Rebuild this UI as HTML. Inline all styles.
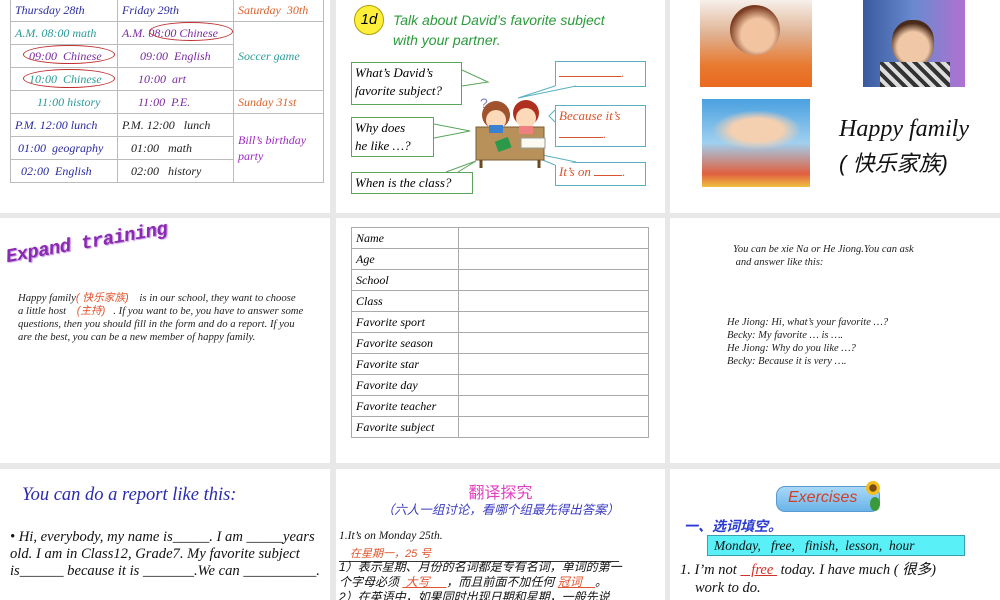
<!DOCTYPE html>
<html><head><meta charset="utf-8"><style>
*{margin:0;padding:0;box-sizing:border-box}
body{width:1000px;height:600px;background:#e8e8e8;position:relative;overflow:hidden;font-family:"Liberation Serif","Noto Serif CJK SC",serif}
.p{position:absolute;background:#fff;overflow:hidden}
.a{position:absolute;white-space:nowrap}
.i{font-style:italic}
table{border-collapse:collapse}
.tt td{border:1px solid #bbb;font-style:italic;font-size:12px;padding:0 4px;height:23px;vertical-align:middle;white-space:nowrap}
.fm td{border:1px solid #aaa;font-style:italic;font-size:12px;padding:0 4px;height:21px}
.bx{position:absolute;border:1px solid #5aa55a;background:#fff;font-style:italic;font-size:13px;line-height:18px;padding:1px 3px}
.bb{position:absolute;border:1px solid #5ab0c0;background:#fff;font-style:italic;font-size:13px;color:#d9532c;padding:1px 3px}
.cn{font-family:"Liberation Sans","Noto Sans CJK SC",sans-serif}
</style></head><body>

<!-- top left -->
<div class="p" style="left:0;top:0;width:330px;height:213px">
<table class="tt" style="position:absolute;left:10px;top:-2px;width:314px;border:1px solid #888">
<tr><td style="color:#2a2aa0;width:107px">Thursday 28th</td><td style="color:#2a2aa0;width:116px">Friday 29th</td><td style="color:#d9632c">Saturday&nbsp; 30th</td></tr>
<tr><td style="color:#2a9a9a">A.M. 08:00 math</td><td style="color:#7a2aa0">A.M. 08:00 Chinese</td><td rowspan="3" style="color:#2a9a9a">Soccer game</td></tr>
<tr><td style="color:#7a2aa0;padding-left:18px">09:00&nbsp; Chinese</td><td style="color:#7a2aa0;padding-left:22px">09:00&nbsp; English</td></tr>
<tr><td style="color:#2a9a9a;padding-left:18px">10:00&nbsp; Chinese</td><td style="color:#7a2aa0;padding-left:20px">10:00&nbsp; art</td></tr>
<tr><td style="color:#2a9a9a;padding-left:26px">11:00 history</td><td style="color:#7a2aa0;padding-left:20px">11:00&nbsp; P.E.</td><td style="color:#d9632c">Sunday 31st</td></tr>
<tr><td style="color:#2a2aa0">P.M. 12:00 lunch</td><td style="color:#222">P.M. 12:00&nbsp;&nbsp; lunch</td><td rowspan="3" style="color:#9a2ac0;white-space:normal;line-height:16px">Bill’s birthday party</td></tr>
<tr><td style="color:#2a2aa0;padding-left:7px">01:00&nbsp; geography</td><td style="color:#222;padding-left:13px">01:00&nbsp;&nbsp; math</td></tr>
<tr><td style="color:#2a2aa0;padding-left:10px">02:00&nbsp; English</td><td style="color:#222;padding-left:13px">02:00&nbsp;&nbsp; history</td></tr>
</table>
<div class="a" style="left:149px;top:22px;width:84px;height:19px;border:1.5px solid #c03030;border-radius:50%"></div>
<div class="a" style="left:23px;top:45px;width:92px;height:19px;border:1.5px solid #c03030;border-radius:50%"></div>
<div class="a" style="left:23px;top:69px;width:92px;height:19px;border:1.5px solid #c03030;border-radius:50%"></div>
</div>

<!-- top center -->
<div class="p" style="left:336px;top:0;width:329px;height:213px">
<div class="a" style="left:18px;top:5px;width:30px;height:30px;border-radius:50%;background:#ffef3a;border:1px solid #b0a000;font:italic 15px 'Liberation Sans',sans-serif;text-align:center;line-height:28px">1d</div>
<div class="a" style="left:57px;top:10px;font:italic 14px/20px 'Liberation Sans',sans-serif;color:#2a9a3a">Talk about David’s favorite subject<br>with your partner.</div>
<div class="bx" style="left:15px;top:62px;width:111px;height:43px">What’s David’s<br>favorite subject?</div>
<div class="bx" style="left:15px;top:117px;width:83px;height:40px">Why does<br>he like …?</div>
<div class="bx" style="left:15px;top:172px;width:122px;height:22px">When is the class?</div>
<div class="bb" style="left:219px;top:61px;width:91px;height:26px"><span style="display:inline-block;width:62px;border-bottom:1px solid #d9532c;height:14px"></span>.</div>
<div class="bb" style="left:219px;top:105px;width:91px;height:42px;line-height:18px">Because it’s<br><span style="display:inline-block;width:44px;border-bottom:1px solid #d9532c;height:12px"></span>.</div>
<div class="bb" style="left:219px;top:162px;width:91px;height:24px">It’s on <span style="display:inline-block;width:28px;border-bottom:1px solid #d9532c;height:12px"></span>.</div>
<svg class="a" style="left:0;top:0" width="329" height="213">
<g fill="#fff" stroke="#5aa55a"><path d="M126 70 L152 82 L126 86"/><path d="M98 124 L134 131 L98 138"/><path d="M110 172 L140 161 L122 172"/></g>
<g fill="#fff" stroke="#5ab0c0"><path d="M219 86 L182 98 L240 86"/><path d="M219 110 L213 116 L219 122"/><path d="M240 162 L182 150 L219 165"/></g>
<rect x="140" y="127" width="68" height="33" fill="#b8915a" stroke="#7a5a30"/>
<path d="M145 160 v8 M203 160 v8" stroke="#6a4a20" stroke-width="3"/>
<circle cx="160" cy="115" r="14" fill="#a0522d"/><circle cx="160" cy="120" r="10" fill="#fcd9b8"/>
<circle cx="190" cy="113" r="13" fill="#b03020"/><circle cx="190" cy="118" r="10" fill="#fcd9b8"/>
<rect x="153" y="125" width="14" height="8" fill="#3a80d0"/><rect x="183" y="126" width="14" height="8" fill="#f08080"/>
<rect x="160" y="139" width="14" height="11" fill="#2a9a4a" transform="rotate(-20 167 144)"/>
<rect x="185" y="138" width="24" height="10" fill="#fafaf0" stroke="#999"/>
<text x="144" y="108" font-size="14" fill="#8080c0" font-family="Liberation Sans">?</text>
</svg>
</div>

<!-- top right -->
<div class="p" style="left:670px;top:0;width:330px;height:213px">
<div class="a" style="left:30px;top:0;width:112px;height:87px;background:linear-gradient(180deg,#f6f0ea 0%,#e0b090 40%,#e87a30 75%,#ea6a20 100%)"></div>
<div class="a" style="left:60px;top:5px;width:50px;height:50px;border-radius:50%;background:radial-gradient(circle at 55% 60%,#f2c4a0 40%,#7a3a20 70%)"></div>
<div class="a" style="left:193px;top:0;width:102px;height:87px;background:linear-gradient(90deg,#3a5aa0,#6a8ad0 50%,#b070d0)"></div>
<div class="a" style="left:222px;top:20px;width:42px;height:46px;border-radius:45%;background:radial-gradient(circle at 50% 60%,#f0c8a8 45%,#4a2a1a 70%)"></div>
<div class="a" style="left:210px;top:62px;width:70px;height:25px;background:repeating-linear-gradient(45deg,#333 0 4px,#ddd 4px 8px)"></div>
<div class="a" style="left:32px;top:99px;width:108px;height:88px;background:linear-gradient(180deg,#4aa0e0,#a0d0f0 50%,#e06040 85%,#f0c040)"></div>
<div class="a" style="left:42px;top:110px;width:90px;height:40px;background:radial-gradient(ellipse at 50% 50%,#f5d0b0 40%,transparent 70%)"></div>
<div class="a i" style="left:169px;top:116px;font-size:24px;color:#111">Happy family</div>
<div class="a i" style="left:169px;top:146px;font-size:22px;color:#111;font-family:'Liberation Sans','Noto Sans CJK SC',sans-serif">( 快乐家族)</div>
</div>

<!-- middle left -->
<div class="p" style="left:0;top:218px;width:330px;height:245px">
<div class="a" style="left:8px;top:28px;font:italic bold 19px 'Liberation Mono',monospace;letter-spacing:-0.5px;color:#8a2ab0;transform:rotate(-10deg);transform-origin:left bottom;text-shadow:1px 1px 1px #c090e0">Expand training</div>
<div class="a i" style="left:18px;top:74px;font-size:10.7px;line-height:13px;color:#222">Happy family<span class="cn" style="color:#e0532c">( 快乐家族)</span>&nbsp;&nbsp;&nbsp; is in our school, they want to choose<br>a little host&nbsp;&nbsp;&nbsp; <span class="cn" style="color:#e0532c">(主持)</span>&nbsp;&nbsp; . If you want to be, you have to answer some<br>questions, then you should fill in the form and do a report. If you<br>are the best, you can be a new member of happy family.</div>
</div>

<!-- middle center -->
<div class="p" style="left:336px;top:218px;width:329px;height:245px">
<table class="fm" style="position:absolute;left:15px;top:9px;width:298px;border:1px solid #888">
<tr><td style="width:107px">Name</td><td></td></tr><tr><td>Age</td><td></td></tr><tr><td>School</td><td></td></tr><tr><td>Class</td><td></td></tr><tr><td>Favorite sport</td><td></td></tr><tr><td>Favorite season</td><td></td></tr><tr><td>Favorite star</td><td></td></tr><tr><td>Favorite day</td><td></td></tr><tr><td>Favorite teacher</td><td></td></tr><tr><td>Favorite subject</td><td></td></tr>
</table>
</div>

<!-- middle right -->
<div class="p" style="left:670px;top:218px;width:330px;height:245px">
<div class="a i" style="left:63px;top:25px;font-size:10.5px;line-height:13px;color:#222">You can be xie Na or He Jiong.You can ask<br>&nbsp;and answer like this:</div>
<div class="a i" style="left:57px;top:98px;font-size:10.5px;line-height:13px;color:#222">He Jiong: Hi, what’s your favorite …?<br>Becky: My favorite … is ….<br>He Jiong: Why do you like …?<br>Becky: Because it is very ….</div>
</div>

<!-- bottom left -->
<div class="p" style="left:0;top:469px;width:330px;height:131px">
<div class="a i" style="left:22px;top:16px;font-size:18.5px;color:#2a2ab0">You can do a report like this:</div>
<div class="a i" style="left:10px;top:60px;font-size:14.6px;line-height:17px;color:#111">• Hi, everybody, my name is_____. I am _____years<br>old. I am in Class12, Grade7. My favorite subject<br>is______ because it is _______.We can __________.</div>
</div>

<!-- bottom center -->
<div class="p" style="left:336px;top:469px;width:329px;height:131px">
<div class="a cn" style="left:0;width:329px;text-align:center;top:10px;font-size:16px;color:#e040c0">翻译探究</div>
<div class="a cn i" style="left:0;width:329px;text-align:center;top:30px;font-size:12.5px;color:#3a3ac0">（六人一组讨论，看哪个组最先得出答案）</div>
<div class="a i" style="left:3px;top:61px;font-size:11.5px;color:#111">1.It’s on Monday 25th.</div>
<div class="a cn i" style="left:14px;top:76px;font-size:11px;color:#e0532c">在星期一，25 号</div>
<div class="a" style="left:3px;top:92px;width:280px;border-top:1px solid #333"></div>
<div class="a cn i" style="left:3px;top:91px;font-size:12px;line-height:15px;color:#111">1）表示星期、月份的名词都是专有名词，单词的第一<br>个字母必须 <span style="color:#e0532c;text-decoration:underline">&nbsp;大写&nbsp;&nbsp;&nbsp;&nbsp;&nbsp;</span>，而且前面不加任何 <span style="color:#e0532c;text-decoration:underline">冠词&nbsp;&nbsp;&nbsp;&nbsp;</span>。<br>2）在英语中，如果同时出现日期和星期，一般先说</div>
</div>

<!-- bottom right -->
<div class="p" style="left:670px;top:469px;width:330px;height:131px">
<div class="a" style="left:106px;top:17px;width:104px;height:26px;border-radius:9px;background:linear-gradient(#a8d8f8,#6ab4e8);border:1px solid #5a9ad0"></div>
<div class="a i" style="left:118px;top:20px;font:italic 16px 'Liberation Sans',sans-serif;color:#d0402a">Exercises</div>
<div class="a" style="left:196px;top:12px;width:14px;height:14px;border-radius:50%;background:radial-gradient(#7a4a10 35%,#f0c020 40%)"></div>
<div class="a" style="left:200px;top:28px;width:10px;height:14px;border-radius:50%;background:#3a9a3a"></div>
<div class="a cn i" style="left:14px;top:47px;font-size:14px;font-weight:bold;color:#2a3ad0">一、选词填空。</div>
<div class="a i" style="left:37px;top:66px;width:258px;height:21px;background:#5af0f8;border:1px solid #3aa0b0;font-size:13.5px;line-height:20px;padding-left:6px;color:#111">Monday,&nbsp;&nbsp; free,&nbsp;&nbsp; finish,&nbsp; lesson,&nbsp; hour</div>
<div class="a i" style="left:10px;top:89px;font-size:14.5px;color:#111">1. I’m not <span style="text-decoration:underline;color:#d0302a">&nbsp;&nbsp;&nbsp;free&nbsp;</span> today. I have much ( <span class="cn">很多</span>)</div>
<div class="a i" style="left:25px;top:111px;font-size:14.5px;color:#111">work to do.</div>
</div>
</body></html>
